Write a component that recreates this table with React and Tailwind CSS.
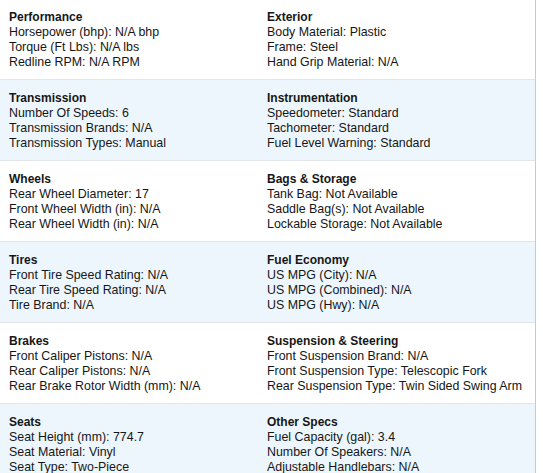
import React from "react";

const rows = [
  [
    ["Performance", ["Horsepower (bhp): N/A bhp", "Torque (Ft Lbs): N/A lbs", "Redline RPM: N/A RPM"]],
    ["Exterior", ["Body Material: Plastic", "Frame: Steel", "Hand Grip Material: N/A"]],
  ],
  [
    ["Transmission", ["Number Of Speeds: 6", "Transmission Brands: N/A", "Transmission Types: Manual"]],
    ["Instrumentation", ["Speedometer: Standard", "Tachometer: Standard", "Fuel Level Warning: Standard"]],
  ],
  [
    ["Wheels", ["Rear Wheel Diameter: 17", "Front Wheel Width (in): N/A", "Rear Wheel Width (in): N/A"]],
    ["Bags & Storage", ["Tank Bag: Not Available", "Saddle Bag(s): Not Available", "Lockable Storage: Not Available"]],
  ],
  [
    ["Tires", ["Front Tire Speed Rating: N/A", "Rear Tire Speed Rating: N/A", "Tire Brand: N/A"]],
    ["Fuel Economy", ["US MPG (City): N/A", "US MPG (Combined): N/A", "US MPG (Hwy): N/A"]],
  ],
  [
    ["Brakes", ["Front Caliper Pistons: N/A", "Rear Caliper Pistons: N/A", "Rear Brake Rotor Width (mm): N/A"]],
    ["Suspension & Steering", ["Front Suspension Brand: N/A", "Front Suspension Type: Telescopic Fork", "Rear Suspension Type: Twin Sided Swing Arm"]],
  ],
  [
    ["Seats", ["Seat Height (mm): 774.7", "Seat Material: Vinyl", "Seat Type: Two-Piece"]],
    ["Other Specs", ["Fuel Capacity (gal): 3.4", "Number Of Speakers: N/A", "Adjustable Handlebars: N/A"]],
  ],
];

function Cell({ title, items }) {
  return (
    <div className="pl-[9px] pt-[11px] pb-[9px]">
      <div className="font-bold text-[12px]">{title}</div>
      {items.map((t) => (
        <div key={t}>{t}</div>
      ))}
    </div>
  );
}

export default function App() {
  return (
    <div
      className="w-[543px] h-[473px] overflow-hidden bg-white text-[12.4px] leading-[15px] text-[#161616]"
      style={{ fontFamily: '"Liberation Sans", Arial, sans-serif' }}
    >
      <div className="w-[536px] border-r border-[#c9c9c9] -mt-px">
        {rows.map((r, i) => (
          <div
            key={i}
            className={`grid grid-cols-[258px_1fr] border-b border-[#e1e4e8] ${
              i % 2 === 1 ? "bg-[#eef6fd]" : "bg-white"
            }`}
          >
            <Cell title={r[0][0]} items={r[0][1]} />
            <Cell title={r[1][0]} items={r[1][1]} />
          </div>
        ))}
      </div>
    </div>
  );
}
